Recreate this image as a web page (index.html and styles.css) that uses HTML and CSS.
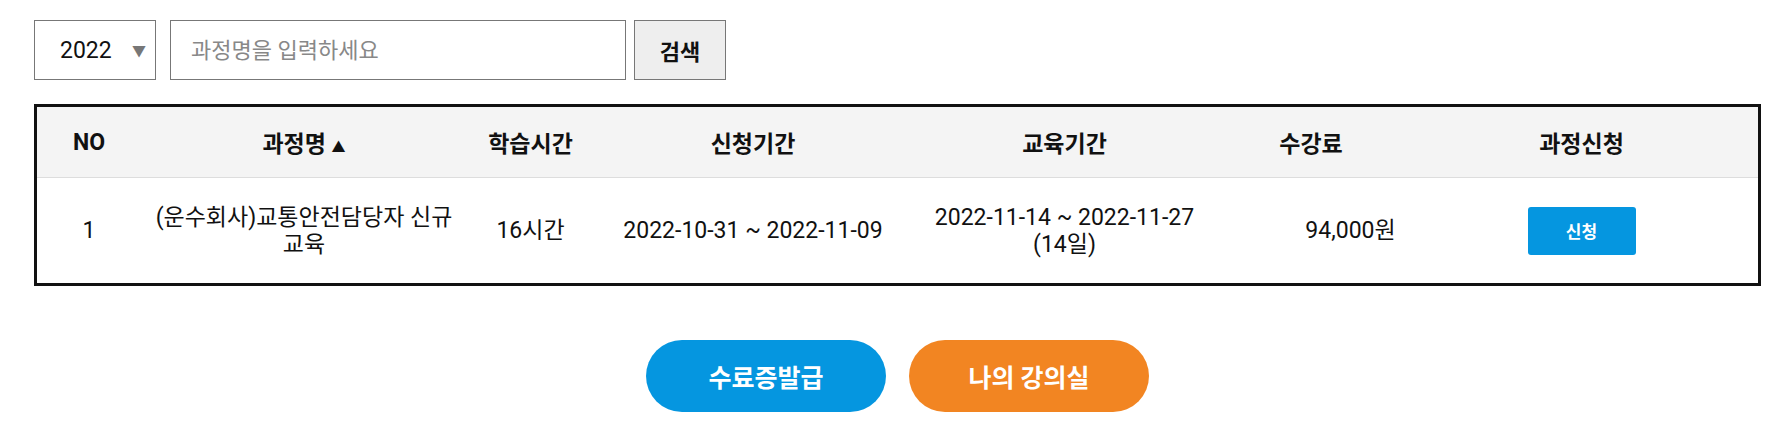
FILE: index.html
```html
<!DOCTYPE html>
<html lang="ko">
<head>
    <meta charset="UTF-8">
    <meta name="viewport" content="width=device-width, initial-scale=1.0">
    <title>과정신청</title>
    <link rel="stylesheet" href="styles.css">
</head>
<body>
    <div class="container">
        <div class="search-bar">
            <div class="select-wrap">
                <select id="yearSelector">
                    <option value="2022">2022</option>
                    <option value="2021">2021</option>
                    <option value="2020">2020</option>
                </select>
                <span class="select-arrow">▼</span>
            </div>
            <input type="text" id="keyword" class="search-input" placeholder="과정명을 입력하세요">
            <button class="search-btn">검색</button>
        </div>

        <div class="table-box">
            <table class="course-table">
                <colgroup>
                    <col class="col-no">
                    <col class="col-name">
                    <col class="col-time">
                    <col class="col-apply">
                    <col class="col-edu">
                    <col class="col-fee">
                    <col class="col-btn">
                </colgroup>
                <thead>
                    <tr>
                        <th>NO</th>
                        <th>과정명 <span class="sort">▲</span></th>
                        <th>학습시간</th>
                        <th>신청기간</th>
                        <th>교육기간</th>
                        <th>수강료</th>
                        <th>과정신청</th>
                    </tr>
                </thead>
                <tbody>
                    <tr>
                        <td>1</td>
                        <td>(운수회사)교통안전담당자 신규 교육</td>
                        <td>16시간</td>
                        <td>2022-10-31 ~ 2022-11-09</td>
                        <td>2022-11-14 ~ 2022-11-27 (14일)</td>
                        <td class="fee">94,000원</td>
                        <td><button class="apply-btn">신청</button></td>
                    </tr>
                </tbody>
            </table>
        </div>

        <div class="bottom-buttons">
            <button class="pill-btn blue">수료증발급</button>
            <button class="pill-btn orange">나의 강의실</button>
        </div>
    </div>
</body>
</html>
```

FILE: styles.css
```css
body {
    margin: 0;
    font-family: Roboto, "Noto Sans CJK KR", sans-serif;
    color: #111;
    background-color: white;
}

.container {
    width: 1727px;
    margin-left: 34px;
    padding-top: 20px;
}

.search-bar {
    display: flex;
    height: 60px;
}

.select-wrap {
    position: relative;
    width: 122px;
    height: 60px;
    margin-right: 14px;
}

.select-wrap select {
    appearance: none;
    width: 100%;
    height: 100%;
    padding: 0 0 0 25px;
    border: 1px solid #777;
    border-radius: 0;
    background-color: white;
    font-family: inherit;
    font-size: 23px;
    color: #111;
}

.select-arrow {
    position: absolute;
    right: 10px;
    top: 20px;
    font-size: 14px;
    color: #777;
    pointer-events: none;
}

.search-input {
    width: 456px;
    height: 60px;
    box-sizing: border-box;
    padding: 0 20px;
    border: 1px solid #777;
    font-family: inherit;
    font-size: 22px;
    color: #111;
    margin-right: 8px;
}

.search-input::placeholder {
    color: #888;
}

.search-btn {
    width: 92px;
    height: 60px;
    border: 1px solid #777;
    background-color: #eee;
    font-family: inherit;
    font-size: 22px;
    font-weight: bold;
    color: #111;
    padding: 0;
}

.table-box {
    margin-top: 24px;
    border: 3px solid #111;
}

.course-table {
    width: 100%;
    table-layout: fixed;
    border-collapse: separate;
    border-spacing: 0;
    font-size: 23px;
}

.col-no { width: 104px; }
.col-name { width: 326px; }
.col-time { width: 127px; }
.col-apply { width: 318px; }
.col-edu { width: 305px; }
.col-fee { width: 188px; }
.col-btn { width: 353px; }

.course-table th {
    height: 70px;
    padding: 0 4px;
    background-color: #f4f4f4;
    border-bottom: 1px solid #ddd;
    font-weight: bold;
}

.course-table .sort {
    font-size: 14px;
}

.course-table td {
    height: 105px;
    padding: 0 4px;
    text-align: center;
    line-height: 27px;
}

.course-table td.fee {
    padding-left: 83px;
}

.apply-btn {
    width: 108px;
    height: 48px;
    border: none;
    border-radius: 3px;
    background-color: #0596e0;
    color: white;
    font-family: inherit;
    font-size: 17px;
    font-weight: bold;
}

.bottom-buttons {
    display: flex;
    justify-content: center;
    gap: 23px;
    margin-top: 54px;
}

.pill-btn {
    width: 240px;
    height: 72px;
    border: none;
    border-radius: 36px;
    color: white;
    font-family: inherit;
    font-size: 25px;
    font-weight: bold;
}

.pill-btn.blue {
    background-color: #0596e0;
}

.pill-btn.orange {
    background-color: #f28522;
}
```
